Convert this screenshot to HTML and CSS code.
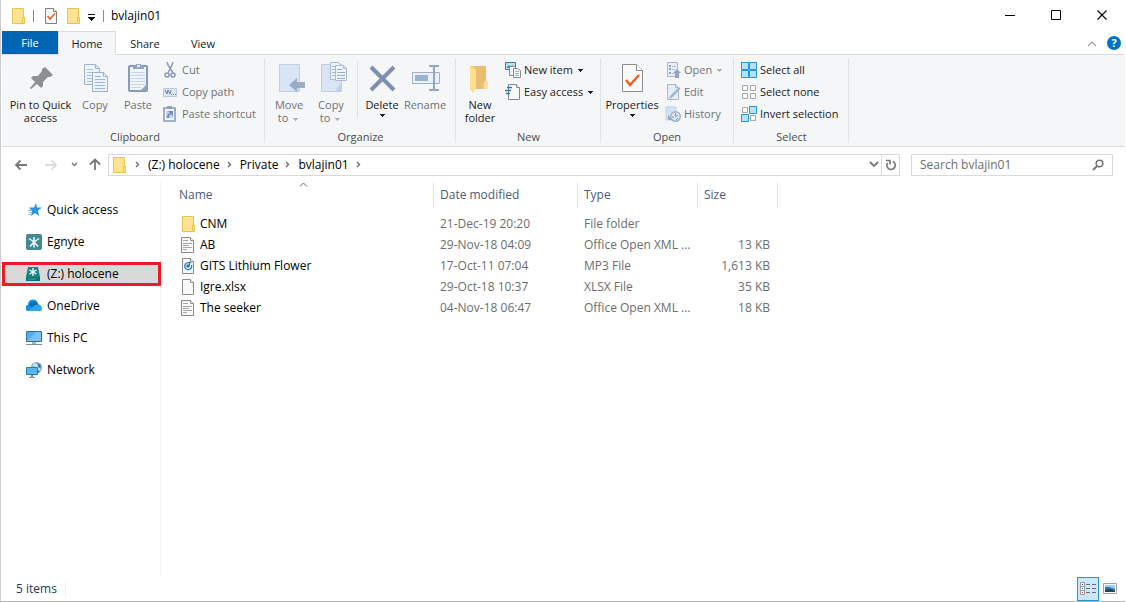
FILE: index.html
```html
<!DOCTYPE html>
<html lang="en">
<head>
    <meta charset="UTF-8">
    <meta name="viewport" content="width=device-width, initial-scale=1.0">
    <title>bvlajin01</title>
    <link rel="stylesheet" href="styles.css">
</head>
<body>
    <!-- Shared icons -->
    <svg class="sprite" aria-hidden="true">
        <symbol id="folder" viewBox="0 0 16 16">
            <path d="M1.5.5h11v9h1v6h-12z" fill="#ffe391" stroke="#e9c34f"/>
            <path d="M11.5 9.5h2v6h-2z" fill="#ffe391" stroke="#e9c34f"/>
        </symbol>
        <symbol id="doc" viewBox="0 0 16 16">
            <path d="M.5.5h9l3 3v12h-12z" fill="#f9f9f9" stroke="#8c8c8c"/>
            <path d="M9.5.5v3h3" fill="#fff" stroke="#8c8c8c"/>
            <path d="M2 3.5h5M2 6.5h9M2 8.5h6M2 10.5h9M2 12.5h4" stroke="#a5a5a5"/>
        </symbol>
        <symbol id="caret" viewBox="0 0 5 3"><path d="M0 0h5v1h-1v1h-1v1h-1v-1h-1v-1h-1z" fill="currentColor"/></symbol>
        <symbol id="crumb" viewBox="0 0 5 7"><path d="M1 1l2.5 2.5L1 6" fill="none" stroke="#6d6d6d" stroke-width="1.4"/></symbol>
    </svg>

    <div class="window">
        <header class="titleBar">
            <svg class="icon" width="16" height="16"><use href="#folder"/></svg>
            <span class="titleDivider"></span>
            <button class="quickBtn" aria-label="Properties">
                <svg width="14" height="16" viewBox="0 0 14 16">
                    <path d="M1.5.5h8l3 3v12h-11z" fill="#f7f8fa" stroke="#808080"/>
                    <path d="M9.5.5v3h3" fill="#fff" stroke="#808080"/>
                    <path d="M3.5 8l2.5 3 5-5.5" fill="none" stroke="#f1601b" stroke-width="1.6"/>
                </svg>
            </button>
            <button class="quickBtn" aria-label="New folder"><svg width="16" height="16"><use href="#folder"/></svg></button>
            <button class="quickBtn quickMenu" aria-label="Customize Quick Access Toolbar">
                <svg width="8" height="7" viewBox="0 0 8 7"><path d="M0 0h7v1H0zM0 3h7v1H6v1H5v1H4v1H3V6H2V5H1V4H0z" fill="#111"/></svg>
            </button>
            <span class="titleDivider"></span>
            <h1 class="title">bvlajin01</h1>
            <div class="windowBtns">
                <button aria-label="Minimize"><svg width="11" height="11"><path d="M0 5.5h10" stroke="#000"/></svg></button>
                <button aria-label="Maximize"><svg width="11" height="11"><path d="M.5.5h9v9h-9z" fill="none" stroke="#000"/></svg></button>
                <button aria-label="Close"><svg width="11" height="11"><path d="M.5.5l9 9M9.5.5l-9 9" stroke="#000" stroke-width="1.1"/></svg></button>
            </div>
        </header>

        <nav class="tabs">
            <button class="tab tabFile">File</button>
            <button class="tab tabActive">Home</button>
            <button class="tab">Share</button>
            <button class="tab">View</button>
            <div class="tabTools">
                <button aria-label="Minimize the Ribbon"><svg width="10" height="6"><path d="M1 5l4-4 4 4" fill="none" stroke="#a0a5ab" stroke-width="1.3"/></svg></button>
                <button class="help" aria-label="Help">?</button>
            </div>
        </nav>

        <section class="ribbon">
            <div class="group groupClipboard">
                <div class="groupBody">
                    <button class="bigBtn wide">
                        <svg width="32" height="32" viewBox="0 0 32 32"><path d="M20 5l8 8-3 2h-2l-5 5v4l-2 2-4-4-6 5-1-1 5-6-4-4 2-2h5l4-5V7z" fill="#8d9093"/></svg>
                        <span>Pin to Quick access</span>
                    </button>
                    <button class="bigBtn copyBtn" disabled>
                        <svg width="32" height="32" viewBox="0 0 32 32" stroke="#9fb2d2">
                            <path d="M5.5 2.5h11l4 4v16h-15z" fill="#edf3fb"/><path d="M16.5 2.5v4h4" fill="none"/>
                            <path d="M8 7.5h6M8 10.5h8M8 13.5h8M8 16.5h8M8 19.5h8" stroke="#a9bddd"/>
                            <path d="M13.5 10.5h11l4 4v15h-15z" fill="#edf3fb"/><path d="M24.5 10.5v4h4" fill="none"/>
                            <path d="M16 14.5h6M16 17.5h10M16 20.5h10M16 23.5h10M16 26.5h10" stroke="#9eb5da"/>
                        </svg>
                        <span>Copy</span>
                    </button>
                    <button class="bigBtn" disabled>
                        <svg width="32" height="32" viewBox="0 0 32 32">
                            <rect x="7" y="4" width="18" height="25" rx="1" fill="#f1f5fd" stroke="#8499c0" stroke-width="2"/>
                            <path d="M11 7V4h3V2h5v2h3v3z" fill="#96a5c0"/><path d="M15 3h3v2h-3z" fill="#e6ecf5"/>
                            <path d="M9 10.5h14M9 13.5h14M9 16.5h14M9 19.5h14M9 22.5h14M9 25.5h10" stroke="#c6d3ea"/>
                            <path d="M18 29l7-7v7z" fill="#8fa1c2"/>
                        </svg>
                        <span>Paste</span>
                    </button>
                    <div class="smallList">
                        <button class="smallBtn" disabled>
                            <svg width="16" height="16" viewBox="0 0 16 16" fill="none" stroke="#8999b6" stroke-width="1.5"><path d="M4 0l1 3 5 8M10 0l-1 3-4 8"/><circle cx="4" cy="13" r="2"/><circle cx="10" cy="13" r="2"/></svg>
                            Cut
                        </button>
                        <button class="smallBtn" disabled>
                            <svg width="16" height="16" viewBox="0 0 16 16"><path d="M.5 4.5h13v8H.5z" fill="#dce6f5" stroke="#b7c8e2"/><path d="M2 6l2 4 1-4 2 4 1-4" fill="none" stroke="#6d82aa"/><path d="M8 10.500h1M10 10.500h1M12 10.500h1" stroke="#6d82aa"/></svg>
                            Copy path
                        </button>
                        <button class="smallBtn" disabled>
                            <svg width="16" height="16" viewBox="0 0 16 16"><path d="M1 2h11v13H1z" fill="#f3f7fd" stroke="#879cc1" stroke-width="1.6"/><path d="M4 0h5v3H4z" fill="#8f9fbd"/><path d="M3 5h7v7H3z" fill="#c0cfe8"/><path d="M4 12c0-3 1-4 3-5L5 5h5v5L8 8c-2 1-2 2-2 4z" fill="#718bb8"/></svg>
                            Paste shortcut
                        </button>
                    </div>
                </div>
                <h2 class="groupName">Clipboard</h2>
            </div>

            <div class="group groupOrganize">
                <div class="groupBody">
                    <button class="bigBtn" disabled>
                        <svg width="32" height="32" viewBox="0 0 32 32"><path d="M6.5 2.5h20v27h-20z" fill="#d9e4f5" stroke="#c0cfe5"/><path d="M23 22h4v7h-4z" fill="#c9d7ed"/><path d="M16 23l8-7v4h8v6h-8v4z" fill="#9aacc7"/></svg>
                        <span>Move<br>to <svg class="caret"><use href="#caret"/></svg></span>
                    </button>
                    <button class="bigBtn" disabled>
                        <svg width="32" height="32" viewBox="0 0 32 32" stroke="#a9bbd6">
                            <path d="M6.5 2.5h20v27h-20z" fill="#d9e4f5" stroke="#c0cfe5"/><path d="M20 29l6-8v8z" fill="#c3d2ea" stroke="none"/>
                            <path d="M15.5.5h8l3 3v14h-11z" fill="#edf3fb"/><path d="M17 4.5h6M17 7.5h7M17 10.5h7M17 13.5h7"/>
                            <path d="M20.5 3.5h8l3 3v12h-11z" fill="#edf3fb"/><path d="M28.5 3.5v3h3" fill="none"/><path d="M22 7.5h5M22 10.5h8M22 13.5h8M22 16.5h8" stroke="#96acd0"/>
                        </svg>
                        <span>Copy<br>to <svg class="caret"><use href="#caret"/></svg></span>
                    </button>
                    <span class="splitter"></span>
                    <button class="bigBtn">
                        <svg width="32" height="32" viewBox="0 0 32 32"><path d="M5 5l23 23M28 5L5 28" stroke="#7d8fb5" stroke-width="4"/></svg>
                        <span>Delete</span>
                        <svg class="caret"><use href="#caret"/></svg>
                    </button>
                    <button class="bigBtn rename" disabled>
                        <svg width="32" height="32" viewBox="0 0 32 32"><path d="M3.5 10.5h27v11h-27z" fill="#eaf1fb" stroke="#9db1cf"/><path d="M6 13h13v6H6z" fill="#9bb1cf"/><path d="M20 4h4l1 1 1-1h4M20 28h4l1-1 1 1h4M25 5v22" fill="none" stroke="#92a5c2" stroke-width="2"/></svg>
                        <span>Rename</span>
                    </button>
                </div>
                <h2 class="groupName">Organize</h2>
            </div>

            <div class="group groupNew">
                <div class="groupBody">
                    <button class="bigBtn">
                        <svg width="32" height="32" viewBox="0 0 32 32"><path d="M7 4h15v16l2 2v5H7z" fill="#eec37c"/><path d="M12 4h10v17h-5v6h-5z" fill="#e9bd72"/><path d="M6 4l6 4v17l-3 6-3-4z" fill="#ffe08a"/><path d="M20 19h4v8h-4z" fill="#ffe19a"/></svg>
                        <span>New folder</span>
                    </button>
                    <div class="smallList">
                        <button class="smallBtn">
                            <svg width="16" height="16" viewBox="0 0 16 16"><path d="M.5.5h10v7H.5z" fill="#b8e1f6" stroke="#3e779f"/><path d="M2 5l2-2 2 2 1-2 2 3H2z" fill="#3d8bbd"/><path d="M4.5 4.5h6v9h-6z" fill="#f6f6f6" stroke="#8b8b8b"/><path d="M8.5 6.5h4l3 2v7h-7z" fill="#fff" stroke="#8b8b8b"/><path d="M10 9.5h4M10 11.5h4M10 13.5h4" stroke="#8db9d1"/></svg>
                            New item <svg class="caret"><use href="#caret"/></svg>
                        </button>
                        <button class="smallBtn">
                            <svg width="16" height="16" viewBox="0 0 16 16"><path d="M3.5.5h8l3 3v12h-11z" fill="#f8f8f8" stroke="#888"/><path d="M11.5.5v3h3" fill="#fff" stroke="#888"/><path d="M2 3.5h5M0 6.5h6M1 9.5h4" fill="none" stroke="#277dbb" stroke-width="1.3"/></svg>
                            Easy access <svg class="caret"><use href="#caret"/></svg>
                        </button>
                    </div>
                </div>
                <h2 class="groupName">New</h2>
            </div>

            <div class="group groupOpen">
                <div class="groupBody">
                    <button class="bigBtn props">
                        <svg width="32" height="32" viewBox="0 0 32 32"><path d="M6.5 2.5h14l6 6v21h-20z" fill="#fafafa" stroke="#8b8b8b"/><path d="M20.5 2.5v6h6" fill="#fff" stroke="#8b8b8b"/><path d="M10 18l4 5 9-10" fill="none" stroke="#f15a17" stroke-width="2.4"/></svg>
                        <span>Properties</span>
                        <svg class="caret"><use href="#caret"/></svg>
                    </button>
                    <div class="smallList">
                        <button class="smallBtn" disabled>
                            <svg width="16" height="16" viewBox="0 0 16 16"><path d="M2.5.5h10v14h-10z" fill="#e7eefa" stroke="#a9b9d5"/><path d="M4 3h2v2H4zM4 6h2v2H4zM4 10h2v2H4z" fill="#8da3c8"/><path d="M7 4.5h4M7 7.5h3M7 11.5h2" stroke="#b2c1dc"/><path d="M12 7l4 4h-2v5h-4v-5H8z" fill="#91a4c5"/></svg>
                            Open <svg class="caret"><use href="#caret"/></svg>
                        </button>
                        <button class="smallBtn" disabled>
                            <svg width="16" height="16" viewBox="0 0 16 16"><path d="M2.5.5h8l3 3v12h-11z" fill="#e5edf9" stroke="#a8b8d3"/><path d="M10.5.5v3h3" fill="none" stroke="#a8b8d3"/><path d="M4 15l1-3 9-9 1.500 2-9 9z" fill="#a3b6d3"/></svg>
                            Edit
                        </button>
                        <button class="smallBtn" disabled>
                            <svg width="16" height="16" viewBox="0 0 16 16"><path d="M1 1h10v13H1z" fill="#d4e1f4" stroke="#c1d0e8"/><circle cx="10.500" cy="10.500" r="4.800" fill="#dce5f2" stroke="#9dafca" stroke-width="1.400"/><path d="M10.500 7v4l2-2M7 11h2M11 14l2-2" fill="none" stroke="#859bc1"/><path d="M3 9v5h5z" fill="#92a7ca"/></svg>
                            History
                        </button>
                    </div>
                </div>
                <h2 class="groupName">Open</h2>
            </div>

            <div class="group groupSelect">
                <div class="groupBody">
                    <div class="smallList">
                        <button class="smallBtn">
                            <svg width="16" height="16" viewBox="0 0 16 16" fill="#b6e2fb" stroke="#2495e1"><path d="M.5.5h7v7h-7zM8.5.5h7v7h-7zM.5 8.5h7v7h-7zM8.5 8.5h7v7h-7z"/></svg>
                            Select all
                        </button>
                        <button class="smallBtn">
                            <svg width="16" height="16" viewBox="0 0 16 16" fill="#fafafa" stroke="#a6a6a6"><path d="M1.5 1.5h5v5h-5zM9.5 1.5h5v5h-5zM1.5 9.5h5v5h-5zM9.5 9.5h5v5h-5z"/></svg>
                            Select none
                        </button>
                        <button class="smallBtn">
                            <svg width="16" height="16" viewBox="0 0 16 16" fill="#fafafa" stroke="#a6a6a6"><path d="M1.5 1.5h5v5h-5zM9.5 9.5h5v5h-5z"/><path d="M8.5.5h7v7h-7zM.5 8.5h7v7h-7z" fill="#b6e2fb" stroke="#2495e1"/></svg>
                            Invert selection
                        </button>
                    </div>
                </div>
                <h2 class="groupName">Select</h2>
            </div>
        </section>

        <div class="addressRow">
            <div class="navBtns">
                <button aria-label="Back"><svg width="14" height="12" fill="none" stroke="#777" stroke-width="1.8"><path d="M13 6H2M6.5 1.5L2 6l4.5 4.5"/></svg></button>
                <button aria-label="Forward" disabled><svg width="14" height="12" fill="none" stroke="#dcdcdc" stroke-width="1.8"><path d="M1 6h11M7.5 1.5L12 6l-4.5 4.5"/></svg></button>
                <button class="recent" aria-label="Recent locations"><svg width="7" height="5" fill="none" stroke="#777" stroke-width="1.4"><path d="M1 1l2.5 2.5L6 1"/></svg></button>
                <button class="up" aria-label="Up"><svg width="12" height="13" fill="none" stroke="#777" stroke-width="1.8"><path d="M6 12V2M1 6.5L6 1.5l5 5"/></svg></button>
            </div>
            <div class="address">
                <svg class="icon" width="16" height="16"><use href="#folder"/></svg>
                <svg class="crumb"><use href="#crumb"/></svg>
                <a href="#">(Z:) holocene</a>
                <svg class="crumb"><use href="#crumb"/></svg>
                <a href="#">Private</a>
                <svg class="crumb"><use href="#crumb"/></svg>
                <a href="#">bvlajin01</a>
                <svg class="crumb"><use href="#crumb"/></svg>
                <button class="history" aria-label="Previous locations"><svg width="10" height="7" fill="none" stroke="#777" stroke-width="1.8"><path d="M1 1l4 4 4-4"/></svg></button>
                <button class="refresh" aria-label="Refresh"><svg width="12" height="12" viewBox="0 0 12 12" fill="none" stroke="#777" stroke-width="1.6"><path d="M1 1.5h4v4M8 2.500A4.200 4.200 0 1 1 2.500 4"/></svg></button>
            </div>
            <div class="search">
                <input type="search" placeholder="Search bvlajin01" aria-label="Search bvlajin01">
                <svg width="12" height="12" fill="none" stroke="#777"><circle cx="7.500" cy="4.500" r="3.300" stroke-width="1.6"/><path d="M5 7l-4 4" stroke-width="2"/></svg>
            </div>
        </div>

        <main class="content">
            <nav class="sidebar">
                <a href="#" class="place"><svg width="16" height="16" viewBox="0 0 16 16"><path d="M10 1l1 4.500h5l-4 3L13 14l-4-3-4 3 1-5-3-3.500h5z" fill="#2795e6"/><path d="M2 8.500h4M3 10.500h3M2 12.500h3" stroke="#83bfe9"/></svg>Quick access</a>
                <a href="#" class="place"><svg width="16" height="16" viewBox="0 0 16 16"><rect width="16" height="16" rx="2" fill="#438a98"/><path d="M8 7V3M8 8L3 4.500M8 8l5-3.500M8 8v5.500M8 8l-4 4.500M8 8l4 4.500" stroke="#fff" stroke-width="1.4"/></svg>Egnyte</a>
                <a href="#" class="place placeActive"><svg width="16" height="16" viewBox="0 0 16 16"><path d="M2 1h10l2 10v4H0v-4z" fill="#188488"/><path d="M0 11h14v4H0z" fill="#0b7276"/><path d="M2 13h8" stroke="#3da5a6"/><path d="M7 2v8M3.500 4l7 4M10.500 4l-7 4" stroke="#fff" stroke-width="1.3"/></svg>(Z:) holocene</a>
                <a href="#" class="place"><svg width="16" height="16" viewBox="0 0 16 16"><path d="M3 13a3 3 0 0 1-1-6 5 5 0 0 1 10-1 4 4 0 0 1 2 7z" fill="#1490df"/><path d="M3 7a5 5 0 0 1 9-1L7 10z" fill="#0868b9"/><path d="M2 13l7-6c3-1 7 1 7 4 0 1-1 2-2 2z" fill="#28a8ea"/></svg>OneDrive</a>
                <a href="#" class="place"><svg width="16" height="16" viewBox="0 0 16 16"><path d="M.5 1.5h15v10H.5z" fill="#50abf0" stroke="#34758c"/><path d="M1 11l9-9h5v9z" fill="#78c2fa"/><path d="M6 12h4v2H6z" fill="#a1b5c5"/><path d="M0 14.5h16" stroke="#7b8e9d"/></svg>This PC</a>
                <a href="#" class="place"><svg width="16" height="16" viewBox="0 0 16 16"><circle cx="10.500" cy="5.500" r="5.500" fill="#76a9c9"/><path d="M8 1l4 1 1 4 2 1-3 3-2-5-4-1z" fill="#c8e3ef"/><path d="M11 1l4 3-2 2zM12 8l2 2-3 1z" fill="#2d6aa0"/><path d="M.5 5.5h11v7H.5z" fill="#58b4f2" stroke="#287aad"/><path d="M5 13h2v2H5zM3 15h6v1H3z" fill="#78909f"/></svg>Network</a>
            </nav>

            <div class="files">
                <table>
                    <thead>
                        <tr>
                            <th class="colName">Name<svg class="sortMark" width="9" height="5"><path d="M1 4.5L4.5 1 8 4.5" fill="none" stroke="#666"/></svg></th>
                            <th class="colDate">Date modified</th>
                            <th class="colType">Type</th>
                            <th class="colSize">Size</th>
                        </tr>
                    </thead>
                    <tbody>
                        <tr>
                            <td><div class="fileName"><svg width="16" height="16"><use href="#folder"/></svg>CNM</div></td>
                            <td>21-Dec-19 20:20</td><td>File folder</td><td></td>
                        </tr>
                        <tr>
                            <td><div class="fileName"><svg width="16" height="16"><use href="#doc"/></svg>AB</div></td>
                            <td>29-Nov-18 04:09</td><td>Office Open XML ...</td><td>13 KB</td>
                        </tr>
                        <tr>
                            <td><div class="fileName"><svg width="16" height="16" viewBox="0 0 16 16"><path d="M1.5.5h8l3 3v12h-11z" fill="#fafafa" stroke="#8c8c8c"/><path d="M9.5.5v3h3" fill="#fff" stroke="#8c8c8c"/><path d="M9 5.200A3.500 3.500 0 1 0 10.500 7" fill="none" stroke="#1b7fd4" stroke-width="1.3"/><circle cx="7" cy="8" r="1.800" fill="#1b7fd4"/><path d="M8.500 8V4l2 1" fill="none" stroke="#1b7fd4"/></svg>GITS Lithium Flower</div></td>
                            <td>17-Oct-11 07:04</td><td>MP3 File</td><td>1,613 KB</td>
                        </tr>
                        <tr>
                            <td><div class="fileName"><svg width="16" height="16" viewBox="0 0 16 16"><path d="M1.5.5h8l3 3v12h-11z" fill="#fafafa" stroke="#8c8c8c"/><path d="M9.5.5v3h3" fill="#fff" stroke="#8c8c8c"/></svg>Igre.xlsx</div></td>
                            <td>29-Oct-18 10:37</td><td>XLSX File</td><td>35 KB</td>
                        </tr>
                        <tr>
                            <td><div class="fileName"><svg width="16" height="16"><use href="#doc"/></svg>The seeker</div></td>
                            <td>04-Nov-18 06:47</td><td>Office Open XML ...</td><td>18 KB</td>
                        </tr>
                    </tbody>
                </table>
            </div>
        </main>

        <footer class="statusBar">
            <span class="count">5 items</span>
            <div class="viewBtns">
                <button class="viewBtn viewActive" aria-label="Details">
                    <svg width="16" height="14" viewBox="0 0 16 14"><path d="M.5.5h4v4h-4zM.5 4.5h4v4h-4zM.5 8.5h4v4h-4z" fill="#fff" stroke="#9b9ba5"/><path d="M2 2h1v1H2z" fill="#333"/><path d="M2 6h1v1H2z" fill="#2a8dd4"/><path d="M2 10h1v1H2z" fill="#e12020"/><path d="M6 2.5h4M12 2.5h4M6 6.5h4M12 6.5h4M6 10.5h4M12 10.5h4" stroke="#6d6d6d"/></svg>
                </button>
                <button class="viewBtn" aria-label="Large icons">
                    <svg width="14" height="11" viewBox="0 0 14 11"><path d="M.5.5h13v10H.5z" fill="#fff" stroke="#a0a0aa"/><path d="M2 2h10v7H2z" fill="#9bcdf1"/><path d="M2 4h4l6 2v3H2z" fill="#2d75ac"/><path d="M2 7l5-1 5 2v1H2z" fill="#24435b"/></svg>
                </button>
            </div>
        </footer>
    </div>
</body>
</html>
```
FILE: styles.css
```css
* {
    box-sizing: border-box;
}

body {
    margin: 0;
    font-family: "Open Sans", "Noto Sans", sans-serif;
    font-size: 12px;
    line-height: 16px;
    color: #000;
}

button {
    border: none;
    background: none;
    padding: 0;
    margin: 0;
    font: inherit;
    color: inherit;
}

a {
    color: inherit;
    text-decoration: none;
}

svg {
    flex: none;
}

.sprite {
    display: none;
}

.window {
    display: flex;
    flex-direction: column;
    min-height: 100vh;
    background-color: #fff;
    border-left: 1px solid #ccc;
    border-right: 1px solid #fff;
    border-bottom: 1px solid #b5b5b5;
}

/* Title bar */
.titleBar {
    display: flex;
    align-items: center;
    height: 31px;
    padding-left: 10px;
}

.titleDivider {
    width: 1px;
    height: 12px;
    margin: 0 6px;
    background-color: #8a8a8a;
}

.quickBtn {
    display: flex;
    margin: 0 4px;
}

.quickMenu {
    padding-top: 3px;
    margin-left: 2px;
    margin-right: 1px;
}

.title {
    flex: 1;
    margin: 0 1px;
    font-size: 12px;
    font-weight: 400;
}

.windowBtns {
    display: flex;

    button {
        width: 46px;
        height: 31px;
        display: grid;
        place-items: center;
    }
}

/* Tabs */
.tabs {
    display: flex;
    height: 24px;
    padding-left: 1px;
    border-bottom: 1px solid #dadbdc;
}

.tab {
    width: 58px;
    height: 24px;
    border: 1px solid transparent;
    border-bottom: none;
    font-size: 11px;
    color: #222;
}

.tabFile {
    width: 56px;
    height: 23px;
    background-color: #0066b4;
    color: #fff;
}

.tabActive {
    background-color: #f5f6f7;
    border-color: #dadbdc;
}

.tabTools {
    display: flex;
    align-items: center;
    gap: 10px;
    margin-left: auto;
    padding-right: 4px;
}

.help {
    width: 14px;
    height: 14px;
    border-radius: 50%;
    background-color: #0072c9;
    color: #fff;
    font-size: 11px;
    font-weight: 700;
    line-height: 14px;
}

/* Ribbon */
.ribbon {
    display: flex;
    min-height: 92px;
    margin-left: 1px;
    background-color: #f5f6f7;
    border-bottom: 1px solid #dadbdc;
    font-size: 11px;
}

.group {
    position: relative;
    display: flex;
    flex-direction: column;
    padding: 4px 0 1px 3px;
}

.group::after {
    content: "";
    position: absolute;
    top: 3px;
    right: 0;
    bottom: 3px;
    width: 1px;
    background-color: #e2e3e4;
}

.groupClipboard {
    width: 263px;
    padding-left: 6px;
}

.groupOrganize {
    width: 191px;
}

.groupNew {
    width: 145px;
}

.groupOpen {
    width: 133px;
    padding-left: 2px;
}

.groupSelect {
    width: 115px;
}

.groupBody {
    display: flex;
    flex: 1;
}

.groupName {
    margin: 0 3px 0 0;
    font-size: 11px;
    font-weight: 400;
    text-align: center;
    color: #4a4d50;
}

.bigBtn {
    display: flex;
    flex-direction: column;
    align-items: center;
    width: 42px;
    padding-top: 3px;
    line-height: 13px;
    color: #222;

    span {
        margin-top: 4px;
    }
}

.wide {
    width: 65px;
}

.copyBtn,
.rename {
    width: 44px;
}

.props {
    width: 58px;
}

.bigBtn:disabled,
.smallBtn:disabled {
    color: #6f7276;
}

.caret {
    width: 5px;
    height: 3px;
    margin: 3px 2px;
    vertical-align: middle;
}

:disabled .caret {
    color: #b0b3b6;
}

.splitter {
    width: 1px;
    height: 56px;
    margin: 3px 3px 0 5px;
    background-color: #e2e3e4;
}

.smallList {
    display: flex;
    flex-direction: column;
    padding-left: 4px;
}

.smallBtn {
    display: flex;
    align-items: center;
    gap: 3px;
    height: 22px;
    white-space: nowrap;
    color: #222;
}

/* Address row */
.addressRow {
    display: flex;
    align-items: center;
    height: 35px;
    padding-right: 12px;
}

.navBtns {
    display: flex;
    align-items: center;
    width: 107px;
    padding-left: 13px;
    gap: 16px;

    button {
        display: flex;
    }

    .recent {
        margin-left: -3px;
    }

    .up {
        margin-left: -5px;
    }
}

.address {
    display: flex;
    align-items: center;
    flex: 1;
    height: 22px;
    padding-left: 3px;
    border: 1px solid #d9d9d9;
}

.crumb {
    width: 5px;
    height: 7px;
    margin: 0 8px 0 7px;
}

.history {
    margin-left: auto;
    padding-right: 2px;
    display: flex;
}

.refresh {
    display: grid;
    place-items: center;
    width: 18px;
    height: 20px;
    border-left: 1px solid #d9d9d9;
}

.search {
    display: flex;
    align-items: center;
    width: 202px;
    height: 22px;
    margin-left: 11px;
    padding: 0 8px;
    border: 1px solid #d9d9d9;

    input {
        flex: 1;
        min-width: 0;
        padding: 0;
        border: none;
        outline: none;
        font: inherit;
    }

    input::placeholder {
        color: #6d6d6d;
    }
}

/* Content */
.content {
    display: flex;
    flex: 1;
}

.sidebar {
    display: flex;
    flex-direction: column;
    gap: 8px;
    width: 160px;
    padding: 16px 0 0 1px;
    border-right: 1px solid #f3f3f3;
}

.place {
    display: flex;
    align-items: center;
    gap: 5px;
    height: 24px;
    padding-left: 24px;
}

.placeActive {
    margin-right: -1px;
    padding-left: 21px;
    border: 3px solid #ed1c24;
    background-color: #d9d9d9;
}

.files {
    flex: 1;
    padding-left: 10px;

    table {
        width: 607px;
        table-layout: fixed;
        border-collapse: separate;
        border-spacing: 0;
    }

    thead::after {
        content: "";
        display: block;
        height: 5px;
    }

    th {
        position: relative;
        height: 26px;
        padding: 0 6px;
        border-right: 1px solid #e5e5e5;
        font-weight: 400;
        text-align: left;
        color: #4c5a78;
    }

    td {
        height: 21px;
        padding: 0 6px;
        color: #6d6d6d;
        white-space: nowrap;
    }

    td:first-child {
        padding-left: 10px;
        color: #000;
    }

    td:last-child {
        padding-right: 8px;
        text-align: right;
    }

    .colName {
        width: 263px;
        padding-left: 8px;
    }

    .colDate {
        width: 144px;
    }

    .colType {
        width: 120px;
    }

    .colSize {
        width: 80px;
    }
}

.sortMark {
    position: absolute;
    top: 0;
    left: 49%;
}

.fileName {
    display: flex;
    align-items: center;
    gap: 3px;
}

/* Status bar */
.statusBar {
    display: flex;
    align-items: center;
    justify-content: space-between;
    height: 25px;
    padding: 0 4px 0 15px;
}

.count {
    padding-right: 8px;
    border-right: 1px solid #f0f0f0;
    color: #1e395b;
}

.viewBtns {
    display: flex;
}

.viewBtn {
    display: grid;
    place-items: center;
    width: 22px;
    height: 24px;
}

.viewActive {
    background-color: #cce8f7;
    border: 1px solid #2494d8;
}
```
